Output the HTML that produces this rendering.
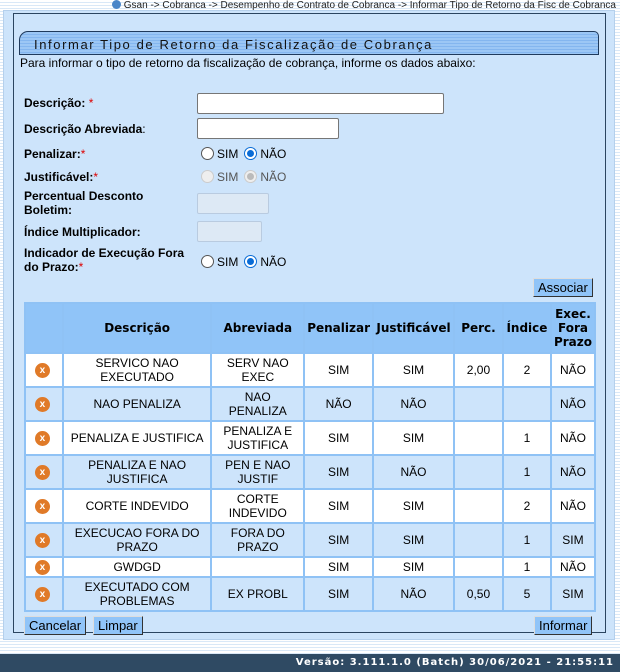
<!DOCTYPE html>
<html><head><meta charset="utf-8"><style>
*{box-sizing:border-box}
body{margin:0;width:620px;height:672px;overflow:hidden;font-family:"Liberation Sans",Arial,sans-serif;font-size:12px;color:#000;
background:repeating-linear-gradient(#fff 0,#fff 2px,#d9e8f7 2px,#d9e8f7 3px);position:relative}
.crumb{position:absolute;right:4px;top:0;font-size:10px;line-height:10px;color:#222;white-space:nowrap}
.crumb i{display:inline-block;width:9px;height:9px;border-radius:50%;background:#4a86c8;vertical-align:-1px;margin-right:3px}
.outer{position:absolute;left:3px;top:10px;width:612px;height:630px;background:#cde4fb;border:1px solid #b5d0ec}
.box{position:absolute;left:13px;top:13px;width:593px;height:620px;border:1px solid #2b4560;background:#cde4fb}
.hdr{position:absolute;left:19px;top:31px;width:580px;height:24px;border:1px solid #1f3a5c;border-radius:9px 5px 0 0;
background:repeating-linear-gradient(#9cc7f5 0,#9cc7f5 2px,#84b6ef 2px,#84b6ef 3px);font-size:13px;letter-spacing:1.6px;padding:5px 0 0 14px;color:#111}
.intro{position:absolute;left:20px;top:56px;font-size:12px}
.lbl{position:absolute;left:24px;font-weight:bold;font-size:12px;line-height:14px}
.lbl s{color:#d00;text-decoration:none;font-weight:normal}
.inp{position:absolute;background:#fff;border:1px solid #767676;border-radius:2px}
.inp.dis{background:#dde9f5;border-color:#b9cbe0}
.rad{position:absolute;left:201px;font-size:12px;white-space:nowrap}
.rb{display:inline-block;width:13px;height:13px;border-radius:50%;border:1px solid #555;background:#fff;vertical-align:-2px;margin-right:3px;position:relative}
.g{margin-left:6px}
.rb.on{border-color:#0a6cd6}.rb.on:after{content:"";position:absolute;left:2px;top:2px;width:7px;height:7px;border-radius:50%;background:#0a6cd6}
.rb.d{border-color:#ccc;background:#eee}.rb.dn:after{content:"";position:absolute;left:2px;top:2px;width:7px;height:7px;border-radius:50%;background:#bbb}
.btn{position:absolute;background:#90c4f8;border:1px solid #333;border-top-color:#ddd;border-left-color:#ddd;font-size:13px;line-height:17px;padding:0 4px;height:19px}
table{position:absolute;left:24px;top:302px;width:572px;border-collapse:collapse}
td,th{border:2px solid #8fc2f5;text-align:center;font-size:12px;padding:0 2px;line-height:14px}
th{background:#90c4f8;font-family:"DejaVu Sans",sans-serif;font-size:12px;height:50px}
tr.w td{background:#fff}tr.b td{background:#cde4fb}
.x{display:inline-block;width:15px;height:15px;border-radius:50%;background:#e07a28;color:#fff;font-size:10px;line-height:15px;font-weight:bold;margin-right:3px}
.foot{position:absolute;left:0;top:654px;width:620px;height:18px;background:#2f4a63;color:#fff;font-family:"DejaVu Sans",sans-serif;font-weight:bold;font-size:10px;text-align:right;padding:3px 6px 0 0;letter-spacing:1px}
</style></head><body>
<div class="outer"></div>
<div class="box"></div>
<div class="crumb"><i></i>Gsan -&gt; Cobranca -&gt; Desempenho de Contrato de Cobranca -&gt; Informar Tipo de Retorno da Fisc de Cobranca</div>
<div class="hdr">Informar Tipo de Retorno da Fiscalização de Cobrança</div>
<div class="intro">Para informar o tipo de retorno da fiscalização de cobrança, informe os dados abaixo:</div>
<div class="lbl" style="top:96px">Descrição: <s>*</s></div>
<div class="inp" style="left:197px;top:93px;width:247px;height:21px"></div>
<div class="lbl" style="top:122px">Descrição Abreviada<span style="font-weight:normal">:</span></div>
<div class="inp" style="left:197px;top:118px;width:142px;height:21px"></div>
<div class="lbl" style="top:147px">Penalizar:<s>*</s></div>
<div class="rad" style="top:147px"><span class="rb"></span>SIM<span class="rb on g"></span>NÃO</div>
<div class="lbl" style="top:170px">Justificável:<s>*</s></div>
<div class="rad" style="top:170px;color:#555"><span class="rb d"></span>SIM<span class="rb d dn g"></span>NÃO</div>
<div class="lbl" style="top:189px">Percentual Desconto<br>Boletim:</div>
<div class="inp dis" style="left:197px;top:193px;width:72px;height:21px"></div>
<div class="lbl" style="top:225px">Índice Multiplicador:</div>
<div class="inp dis" style="left:197px;top:221px;width:65px;height:21px"></div>
<div class="lbl" style="top:246px">Indicador de Execução Fora<br>do Prazo:<s>*</s></div>
<div class="rad" style="top:255px"><span class="rb"></span>SIM<span class="rb on g"></span>NÃO</div>
<div class="btn" style="left:533px;top:278px">Associar</div>
<table>
<tr><th style="width:38px"></th><th style="width:149px">Descrição</th><th style="width:93px">Abreviada</th><th style="width:68px">Penalizar</th><th style="width:81px">Justificável</th><th style="width:49px">Perc.</th><th style="width:48px">Índice</th><th>Exec.<br>Fora<br>Prazo</th></tr>
<tr class="w" style="height:34px"><td><span class="x">x</span></td><td>SERVICO NAO<br>EXECUTADO</td><td>SERV NAO<br>EXEC</td><td>SIM</td><td>SIM</td><td>2,00</td><td>2</td><td>NÃO</td></tr>
<tr class="b" style="height:34px"><td><span class="x">x</span></td><td>NAO PENALIZA</td><td>NAO<br>PENALIZA</td><td>NÃO</td><td>NÃO</td><td></td><td></td><td>NÃO</td></tr>
<tr class="w" style="height:34px"><td><span class="x">x</span></td><td>PENALIZA E JUSTIFICA</td><td>PENALIZA E<br>JUSTIFICA</td><td>SIM</td><td>SIM</td><td></td><td>1</td><td>NÃO</td></tr>
<tr class="b" style="height:34px"><td><span class="x">x</span></td><td>PENALIZA E NAO<br>JUSTIFICA</td><td>PEN E NAO<br>JUSTIF</td><td>SIM</td><td>NÃO</td><td></td><td>1</td><td>NÃO</td></tr>
<tr class="w" style="height:34px"><td><span class="x">x</span></td><td>CORTE INDEVIDO</td><td>CORTE<br>INDEVIDO</td><td>SIM</td><td>SIM</td><td></td><td>2</td><td>NÃO</td></tr>
<tr class="b" style="height:34px"><td><span class="x">x</span></td><td>EXECUCAO FORA DO<br>PRAZO</td><td>FORA DO<br>PRAZO</td><td>SIM</td><td>SIM</td><td></td><td>1</td><td>SIM</td></tr>
<tr class="w" style="height:20px"><td><span class="x">x</span></td><td>GWDGD</td><td></td><td>SIM</td><td>SIM</td><td></td><td>1</td><td>NÃO</td></tr>
<tr class="b" style="height:34px"><td><span class="x">x</span></td><td>EXECUTADO COM<br>PROBLEMAS</td><td>EX PROBL</td><td>SIM</td><td>NÃO</td><td>0,50</td><td>5</td><td>SIM</td></tr>
</table>
<div class="btn" style="left:24px;top:616px">Cancelar</div>
<div class="btn" style="left:93px;top:616px">Limpar</div>
<div class="btn" style="left:534px;top:616px">Informar</div>
<div class="foot">Versão: 3.111.1.0 (Batch) 30/06/2021 - 21:55:11</div>
</body></html>
